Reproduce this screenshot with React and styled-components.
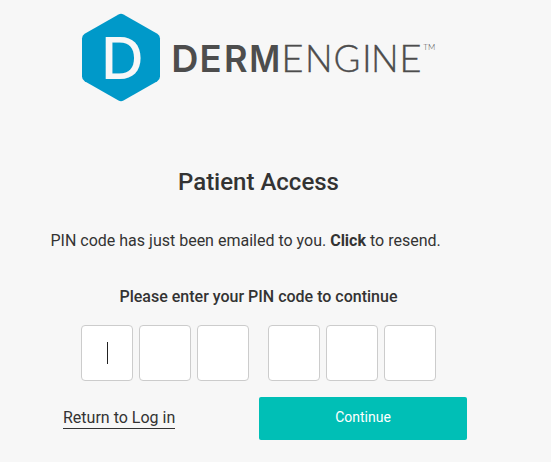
import React from "react";
import styled, { createGlobalStyle } from "styled-components";

const GlobalStyle = createGlobalStyle`
  * { box-sizing: border-box; }
  body {
    margin: 0;
    background: #f7f7f7;
    color: #333;
    font-family: Roboto, sans-serif;
    overflow: hidden;
  }
`;

const Page = styled.main`
  width: 551px;
  height: 462px;
  display: flex;
  flex-direction: column;
`;

const Logo = styled.svg`
  display: block;
  flex: none;
  width: 551px;
  height: 110px;
  font-family: Lato, sans-serif;
`;

const Heavy = styled.text`
  font-family: Inter, sans-serif;
  font-size: 37.3px;
  font-weight: 600;
  fill: #4d4d4d;
`;

const Thin = styled.text`
  font-size: 37.3px;
  font-weight: 300;
  fill: #4d4d4d;
  stroke: #4d4d4d;
  stroke-width: 0.35px;
`;

const Title = styled.h1`
  margin: 56px 0 0 178px;
  font-size: 24px;
  line-height: 32px;
  font-weight: 500;
  white-space: nowrap;
`;

const Message = styled.p`
  margin: 31px 0 0 50.5px;
  font-size: 16px;
  line-height: 24px;
  white-space: nowrap;
`;

const Resend = styled.strong`
  font-weight: 700;
  cursor: pointer;
`;

const Prompt = styled.p`
  margin: 32px 0 0 119.5px;
  font-size: 16px;
  line-height: 24px;
  font-weight: 500;
  white-space: nowrap;
`;

const PinRow = styled.div`
  display: flex;
  gap: 19px;
  margin: 16px 0 0 81px;
`;

const PinGroup = styled.div`
  display: flex;
  gap: 6px;
`;

const PinBox = styled.div`
  display: flex;
  align-items: center;
  justify-content: center;
  width: 52px;
  height: 56px;
  border: 1px solid #ccc;
  border-radius: 4px;
  background: #fff;
`;

const Caret = styled.span`
  width: 1px;
  height: 22px;
  margin-left: 1px;
  background: #222;
`;

const Actions = styled.div`
  display: flex;
  align-items: flex-start;
  justify-content: space-between;
  width: 404px;
  margin: 16px 0 0 63px;
`;

const ReturnLink = styled.a`
  margin-top: 11px;
  border-bottom: 1px solid #333;
  font-size: 16px;
  line-height: 20px;
  white-space: nowrap;
`;

const ContinueButton = styled.button`
  width: 208px;
  height: 43px;
  padding: 0 0 3px;
  border: 0;
  border-radius: 2px;
  background: #00bfb6;
  color: #fff;
  font: 450 14px Roboto, sans-serif;
`;

const heavyGlyphs = [
  ["D", 171.2, 1.01],
  ["E", 199.4, 0.98],
  ["R", 223.9, 0.97],
  ["M", 249.3, 0.9],
];

const thinGlyphs = [
  ["E", 281.2, 1.03],
  ["N", 304.9, 0.98],
  ["G", 333.4, 0.98],
  ["I", 362, 1],
  ["N", 371.1, 0.98],
  ["E", 399.3, 1.03],
];

export default function App() {
  return (
    <Page>
      <GlobalStyle />
      <Logo viewBox="0 0 551 110" aria-label="DermEngine">
        <path
          fill="#0099c9"
          d="M118.5 14.5Q121 13.2 123.5 14.5L157.3 33.8Q160 35.4 160 38.5V76.5Q160 79.6 157.3 81.2L123.5 100.5Q121 101.8 118.5 100.5L84.7 81.2Q82 79.6 82 76.5V38.5Q82 35.4 84.7 33.8Z"
        />
        <text transform="translate(101 79) scale(1.04 1)" fontFamily="Inter, sans-serif" fontSize="57" fontWeight="500" fill="#f7f7f7">D</text>
        {heavyGlyphs.map(([letter, x, scale]) => (
          <Heavy key={x} transform={`translate(${x} 71.6) scale(${scale} 1)`}>{letter}</Heavy>
        ))}
        {thinGlyphs.map(([letter, x, scale]) => (
          <Thin key={x} transform={`translate(${x} 71.6) scale(${scale} 1)`}>{letter}</Thin>
        ))}
        <text x="423.2 428" y="50" fontSize="8" fontWeight="300" fill="#4d4d4d">TM</text>
      </Logo>
      <Title>Patient Access</Title>
      <Message>
        PIN code has just been emailed to you. <Resend>Click</Resend> to resend.
      </Message>
      <Prompt>Please enter your PIN code to continue</Prompt>
      <PinRow>
        <PinGroup>
          <PinBox><Caret /></PinBox>
          <PinBox />
          <PinBox />
        </PinGroup>
        <PinGroup>
          <PinBox />
          <PinBox />
          <PinBox />
        </PinGroup>
      </PinRow>
      <Actions>
        <ReturnLink>Return to Log in</ReturnLink>
        <ContinueButton>Continue</ContinueButton>
      </Actions>
    </Page>
  );
}
